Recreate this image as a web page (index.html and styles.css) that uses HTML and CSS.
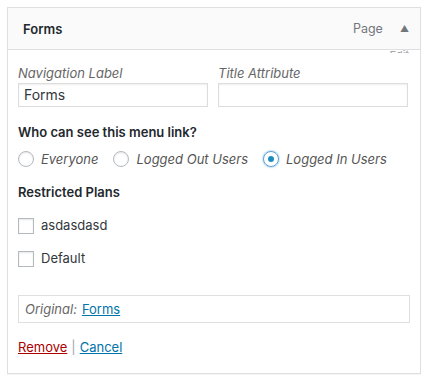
FILE: index.html
```html
<!DOCTYPE html>
<html>
<head>
<meta charset="utf-8">
<link rel="stylesheet" href="styles.css">
</head>
<body>
<div class="menu-item">
  <div class="handle">
    <span class="item-title">Forms</span>
    <span class="controls">
      <span class="item-type">Page</span>
      <span class="arrow">&#9650;</span>
      <span class="edit-leak">Edit</span>
    </span>
  </div>
  <div class="settings">
    <div class="field-row">
      <label class="field">
        <span class="field-label">Navigation Label</span>
        <span class="input">Forms</span>
      </label>
      <label class="field">
        <span class="field-label">Title Attribute</span>
        <span class="input"></span>
      </label>
    </div>
    <div class="section-title">Who can see this menu link?</div>
    <div class="radios">
      <span class="radio-opt"><span class="radio"></span><em>Everyone</em></span>
      <span class="radio-opt"><span class="radio"></span><em>Logged Out Users</em></span>
      <span class="radio-opt"><span class="radio checked"></span><em>Logged In Users</em></span>
    </div>
    <div class="section-title plans">Restricted Plans</div>
    <div class="check-row"><span class="checkbox"></span>asdasdasd</div>
    <div class="check-row"><span class="checkbox"></span>Default</div>
    <div class="original"><em>Original:</em> <a href="#" class="link">Forms</a></div>
    <div class="actions"><a href="#" class="remove">Remove</a><span class="sep">|</span><a href="#" class="link">Cancel</a></div>
  </div>
</div>
</body>
</html>
```
FILE: styles.css
```css
html, body {
  margin: 0;
  padding: 0;
  background: #fff;
}
body {
  padding: 7px;
  font-family: Inter, Roboto, "Noto Sans", sans-serif;
  font-size: 13px;
  color: #23282d;
}
.menu-item {
  width: 412px;
  border: 1px solid #dfdfdf;
  box-shadow: 0 1px 1px rgba(0,0,0,0.04);
}
.handle {
  height: 41px;
  background: #fafafa;
  border-bottom: 1px solid #dfdfdf;
  display: flex;
  align-items: center;
  justify-content: space-between;
  padding: 0 0 0 15px;
  position: relative;
}
.item-title {
  font-weight: 600;
  font-size: 13px;
  color: #23282d;
}
.controls {
  display: flex;
  align-items: center;
  color: #72777c;
  font-size: 12.5px;
}
.arrow {
  font-size: 9px;
  margin-left: 17px;
  margin-right: 11px;
  color: #72777c;
}
.edit-leak {
  position: absolute;
  right: 11px;
  bottom: -4px;
  font-size: 11px;
  color: #a0a5aa;
  height: 3px;
  overflow: hidden;
  line-height: 11px;
}
.settings {
  padding: 13px 10px 17px 10px;
}
.field-row {
  display: flex;
  gap: 10px;
}
.field {
  display: flex;
  flex-direction: column;
  width: 190px;
}
.field-label {
  font-style: italic;
  color: #666;
  line-height: 20px;
}
.input {
  box-sizing: border-box;
  height: 24px;
  border: 1px solid #ddd;
  box-shadow: inset 0 1px 2px rgba(0,0,0,0.07);
  padding: 0 5px;
  font-size: 14px;
  line-height: 22px;
  color: #32373c;
}
.section-title {
  font-weight: 600;
  margin-top: 16px;
  line-height: 18px;
}
.radios {
  display: flex;
  margin-top: 9px;
  gap: 15px;
}
.radio-opt {
  display: flex;
  align-items: center;
  gap: 7px;
  color: #555;
  line-height: 18px;
}
.radio {
  box-sizing: border-box;
  width: 16px;
  height: 16px;
  border-radius: 50%;
  border: 1px solid #b4b9be;
  box-shadow: inset 0 1px 2px rgba(0,0,0,0.1);
  display: inline-block;
}
.radio.checked {
  border-color: #5b9dd9;
  box-shadow: 0 0 2px rgba(30,140,190,0.8);
  position: relative;
}
.radio.checked::after {
  content: "";
  position: absolute;
  left: 4px;
  top: 4px;
  width: 6px;
  height: 6px;
  border-radius: 50%;
  background: #1e8cbe;
}
.plans {
  margin-top: 15px;
}
.check-row {
  display: flex;
  align-items: center;
  gap: 7px;
  margin-top: 16px;
  color: #32373c;
  line-height: 17px;
}
.checkbox {
  box-sizing: border-box;
  width: 16px;
  height: 16px;
  border: 1px solid #b4b9be;
  box-shadow: inset 0 1px 2px rgba(0,0,0,0.1);
}
.original {
  margin-top: 28px;
  border: 1px solid #dfdfdf;
  height: 26px;
  display: flex;
  align-items: center;
  padding: 0 6px;
  gap: 5px;
  color: #666;
}
.link {
  color: #0073aa;
  text-decoration: underline;
}
.actions {
  margin-top: 15px;
  line-height: 18px;
  color: #72777c;
  display: flex;
  gap: 4px;
}
.sep {
  color: #a0a5aa;
}
.remove {
  color: #a00;
  text-decoration: underline;
}
```
